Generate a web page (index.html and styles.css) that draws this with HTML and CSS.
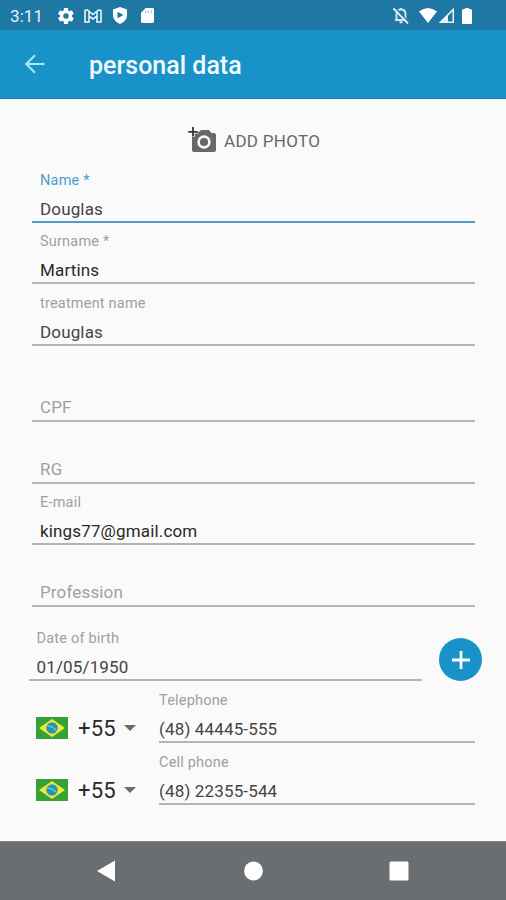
FILE: index.html
```html
<!DOCTYPE html>
<html lang="en">
<head>
<meta charset="utf-8">
<title>personal data</title>
<link rel="stylesheet" href="styles.css">
</head>
<body>
<div class="screen">
  <div class="status">
    <span class="time">3:11</span>
    <svg class="ic gear" viewBox="2 2 20 20"><path d="M19.4 13a7 7 0 0 0 0-2l2.1-1.6c.2-.2.2-.4.1-.6l-2-3.5c-.1-.2-.4-.3-.6-.2l-2.5 1c-.5-.4-1.1-.7-1.7-1L14.400 2.400c0-.2-.2-.4-.5-.4h-4c-.2 0-.4.2-.5.4L9 5.100c-.6.2-1.200.6-1.700 1l-2.500-1c-.2-.1-.5 0-.6.2l-2 3.500c-.1.200-.1.500.1.600L4.500 11a7 7 0 0 0 0 2l-2.100 1.600c-.2.200-.2.400-.1.600l2 3.500c.1.200.4.300.6.200l2.500-1c.5.400 1.100.7 1.700 1l.4 2.700c0 .2.2.4.5.4h4c.2 0 .4-.2.5-.4l.4-2.700c.6-.2 1.200-.6 1.700-1l2.500 1c.2.100.5 0 .6-.2l2-3.500c.1-.2.1-.5-.1-.6zM12 15.500a3.500 3.500 0 1 1 0-7 3.500 3.500 0 0 1 0 7z" fill-rule="evenodd" fill="#fff"/></svg>
    <svg class="ic mail" viewBox="0 0 18 14"><path d="M1 13V1.500L3.500 1 9 5.500 14.500 1 17 1.500V13h-4V7L9 10 5 7v6zM5 7V2.500M13 7V2.500" fill="none" stroke="#e8f5fa" stroke-width="1.600"/></svg>
    <svg class="ic shield" viewBox="0 0 16 17"><path d="M8 0l7 2.500v5.500c0 4-3 7.500-7 9-4-1.500-7-5-7-9V2.500z" fill="#fff"/><path d="M5.500 4.800v6.400L11.500 8z" fill="#1e78a3"/></svg>
    <svg class="ic sd" viewBox="0 0 14 16"><path d="M5 0h7.500Q14 0 14 1.500v13Q14 16 12.500 16h-11Q0 16 0 14.500V5z" fill="#fff"/><path d="M5 2.500v3M8 2.500v3M11 2.500v3" stroke="#a9c6d3" stroke-width="1.300"/></svg>
    <span class="grow"></span>
    <svg class="ic bell" viewBox="0 0 16 17"><path d="M3.500 13V7C3.500 4 5 2.500 8 2.500S12.500 4 12.500 7v6M2 13h12M6.500 15.300h3M8 1v2" fill="none" stroke="#d4e8f1" stroke-width="1.900"/><path d="M2 .5l14 15" stroke="#1e78a3" stroke-width="1.500"/><path d="M.5 1.500l14.500 15" stroke="#e8f5fb" stroke-width="1.800"/></svg>
    <svg class="ic wifi" viewBox="0 0 18 15"><path d="M0 3.500Q9-3.500 18 3.500L9 15z" fill="#fff"/></svg>
    <svg class="ic signal" viewBox="0 0 15 15"><path d="M1.500 14.300L14.300 1.500v12.800z" fill="none" stroke="#e8f4fa" stroke-width="1.600"/><path d="M0 15l9-9v9z" fill="#e8f4fa"/></svg>
    <svg class="ic battery" viewBox="0 0 10 16"><path d="M3 0h4v1h1.500q1.500 0 1.500 1.500V15q0 1-1 1H1q-1 0-1-1V2.500Q0 1 1.500 1H3z" fill="#fff"/></svg>
  </div>
  <header class="appbar">
    <svg class="back" viewBox="0 0 20 20"><path d="M19.500 10H1.500M10 1.200L1.200 10l8.800 8.800" fill="none" stroke="#b5e3f8" stroke-width="2"/></svg>
    <h1>personal data</h1>
  </header>
  <main>
    <div class="photo">
      <svg class="camera" viewBox="0 0 30 28"><path d="M6 6h5l2-2h8l2.500 3H26q2 0 2 2v15q0 2-2 2H6q-2 0-2-2V10h2z" fill="#66696b"/><circle cx="16" cy="16" r="5.400" fill="none" stroke="#fafafa" stroke-width="2.600"/><path d="M5 1v10M0 6h10" stroke="#fafafa" stroke-width="3.200"/><path d="M5 1v9.500M.3 5.800h9.500" stroke="#333" stroke-width="1.800"/></svg>
      <span>ADD PHOTO</span>
    </div>
    <div class="field active"><label>Name *</label><span class="value">Douglas</span></div>
    <div class="field short"><label>Surname *</label><span class="value dark">Martins</span></div>
    <div class="field"><label>treatment name</label><span class="value">Douglas</span></div>
    <div class="field empty spaced"><span class="value">CPF</span></div>
    <div class="field empty"><span class="value">RG</span></div>
    <div class="field short"><label>E-mail</label><span class="value dark">kings77@gmail.com</span></div>
    <div class="field empty"><span class="value">Profession</span></div>
    <div class="birth">
      <div class="field"><label>Date of birth</label><span class="value">01/05/1950</span></div>
      <div class="add"><svg viewBox="0 0 18 18"><path d="M9 0v18M0 9h18" stroke="#fff" stroke-width="2.800"/></svg></div>
    </div>
    <div class="phone">
      <svg class="flag" viewBox="0 0 32 22"><path d="M0 0h32v22H0z" fill="#36a236"/><path d="M16 2l13 9-13 9L3 11z" fill="#f1e83a"/><circle cx="16" cy="11" r="5.800" fill="#2796b5"/><path d="M11 9q6 0 9.500 4.500" fill="none" stroke="#8bd0d2" stroke-width="1.200"/></svg>
      <span class="code">+55</span><i class="caret"></i>
      <div class="field"><label>Telephone</label><span class="value">(48) 44445-555</span></div>
    </div>
    <div class="phone">
      <svg class="flag" viewBox="0 0 32 22"><path d="M0 0h32v22H0z" fill="#36a236"/><path d="M16 2l13 9-13 9L3 11z" fill="#f1e83a"/><circle cx="16" cy="11" r="5.800" fill="#2796b5"/><path d="M11 9q6 0 9.500 4.500" fill="none" stroke="#8bd0d2" stroke-width="1.200"/></svg>
      <span class="code">+55</span><i class="caret"></i>
      <div class="field"><label>Cell phone</label><span class="value">(48) 22355-544</span></div>
    </div>
  </main>
  <nav>
    <svg viewBox="0 0 20 22"><path d="M0 11L18 .5v21z" fill="#fff"/></svg>
    <svg viewBox="0 0 20 22"><circle cx="10.500" cy="11" r="9.400" fill="#fff"/></svg>
    <svg viewBox="0 0 20 22"><rect x=".5" y="1.500" width="19" height="19" rx="1.500" fill="#fff"/></svg>
  </nav>
</div>
</body>
</html>
```
FILE: styles.css
```css
* { box-sizing: border-box; }
body { margin: 0; font-family: Roboto, "Liberation Sans", sans-serif; background: #fafafa; }
.screen { width: 506px; height: 900px; display: flex; flex-direction: column; overflow: hidden; }
.status { height: 30px; background: #1e78a3; display: flex; align-items: center; padding: 1px 33px 0 10px; flex: none; }
.time { color: #e2f2fa; font-size: 17px; width: 48px; line-height: 30px; letter-spacing: .1px; }
.ic { display: block; flex: none; }
.gear { width: 16px; height: 16px; }
.mail { width: 18px; height: 14px; margin-left: 10px; }
.shield { width: 16px; height: 17px; margin-left: 10px; }
.sd { width: 13px; height: 15px; margin-left: 13px; }
.grow { flex: 1; }
.bell { width: 16px; height: 17px; }
.wifi { width: 18px; height: 15px; margin-left: 10px; }
.signal { width: 15px; height: 15px; margin-left: 2px; }
.battery { width: 10px; height: 16px; margin: 0 1px 0 8px; }
.appbar { height: 69px; background: #1892c9; border-bottom: 1px solid #1280b6; display: flex; align-items: center; padding-left: 25px; flex: none; }
.back { width: 20px; height: 20px; }
h1 { margin: 3px 0 0 44px; font-size: 25px; font-weight: 500; color: #f0faff; line-height: 30px; }
main { flex: 1; padding: 0 31px 0 32px; }
.photo { height: 62px; padding: 27px 0 0 156px; display: flex; align-items: flex-start; }
.camera { width: 30px; height: 28px; }
.photo span { margin-left: 6px; font-size: 17px; line-height: 31px; color: #686868; letter-spacing: .3px; }
.field { height: 62px; border-bottom: 2px solid #b4b4b4; display: flex; flex-direction: column; justify-content: flex-end; padding: 0 0 2px 8px; }
.short { height: 61px; }
.spaced { margin-top: 14px; }
label { font-size: 14.500px; line-height: 18px; color: #a0a0a0; letter-spacing: .2px; margin-bottom: 9px; }
.value { font-size: 17px; line-height: 20px; color: #444; letter-spacing: .15px; }
.dark { color: #292929; }
.active { border-color: #4c9dcd; }
.active label { color: #4c9dcd; }
.field.empty { padding-bottom: 3px; }
.empty .value { color: #a0a0a0; }
.birth { display: flex; align-items: flex-end; justify-content: space-between; margin: 12px -7px 0 -3px; }
.birth .field { width: 393px; }
.birth .field label, .birth .field .value { margin-left: -.5px; }
.add { width: 43px; height: 43px; border-radius: 50%; background: #1892c9; display: flex; align-items: center; justify-content: center; }
.add svg { width: 18px; height: 18px; }
.phone { display: flex; align-items: center; padding-left: 4px; }
.flag { width: 32px; height: 22px; margin-top: 31px; }
.code { width: 40px; margin: 34px 0 0 10px; font-size: 22px; line-height: 26px; color: #292929; letter-spacing: .2px; }
.caret { border: 6px solid transparent; border-top-color: #6a6a6a; border-bottom: 0; margin: 32px 0 0 6px; }
.phone .field { flex: 1; margin-left: 23px; padding-left: 0; }
nav { height: 59px; background: #6a6e71; border-top: 1px solid #858789; display: flex; justify-content: center; align-items: center; gap: 126px; flex: none; }
nav svg { width: 20px; height: 22px; }
```
